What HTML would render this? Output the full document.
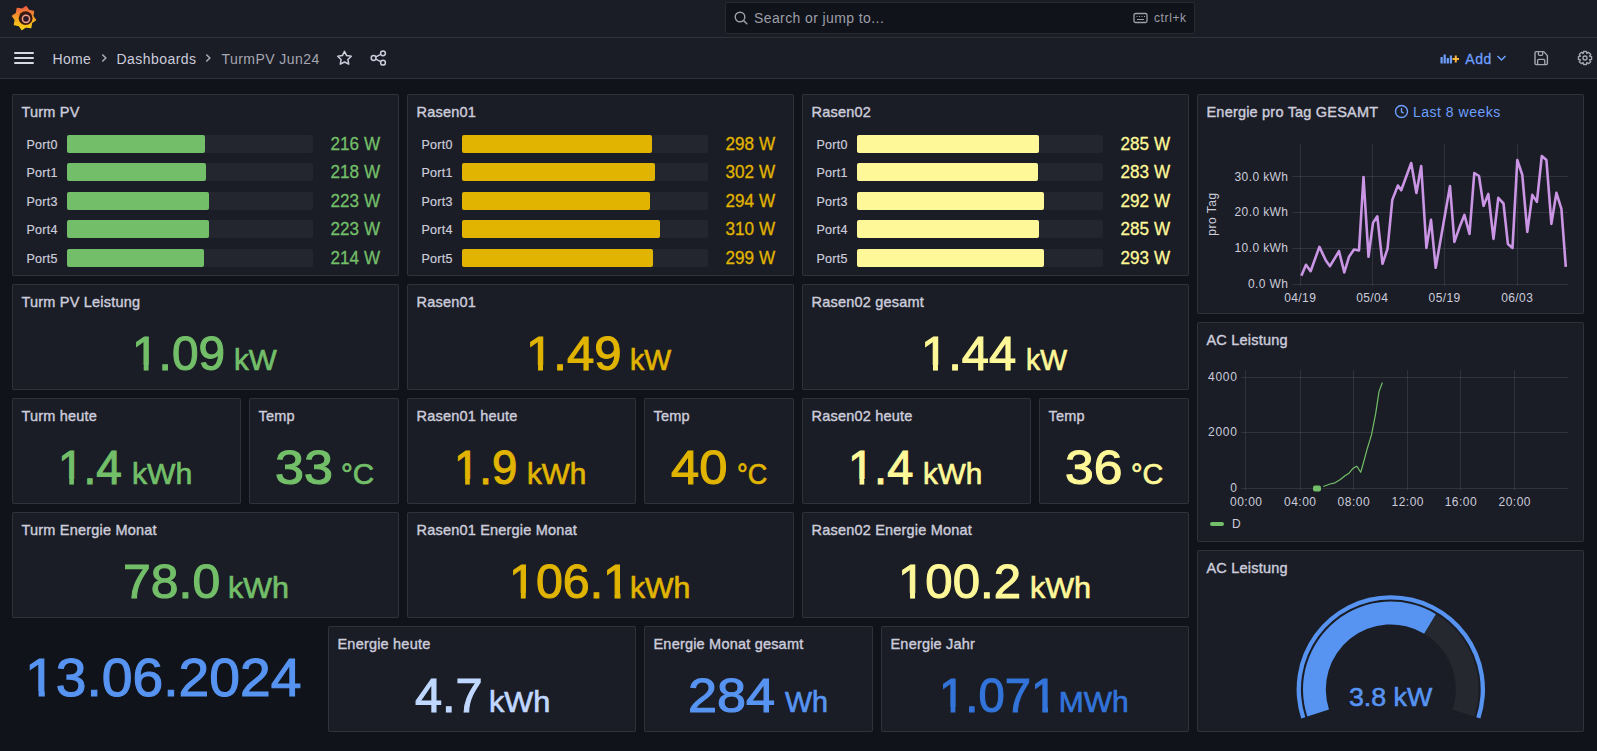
<!DOCTYPE html>
<html><head><meta charset="utf-8">
<style>
*{box-sizing:border-box;margin:0;padding:0}
html,body{width:1597px;height:751px;overflow:hidden;background:#10131a;font-family:"Liberation Sans",sans-serif;color:#ccccdc}
.t{position:absolute;line-height:0;white-space:nowrap}
.topbar{position:absolute;left:0;top:0;width:1597px;height:38px;background:#1a1d25;border-bottom:1px solid rgba(204,204,220,0.12)}
.navbar{position:absolute;left:0;top:38px;width:1597px;height:41px;background:#1a1d25;border-bottom:1px solid rgba(204,204,220,0.12)}
.search{position:absolute;left:725px;top:2px;width:470px;height:32px;background:#10131a;border:1px solid rgba(204,204,220,0.12);border-radius:2px}
.panel{position:absolute;background:#1a1d25;border:1px solid rgba(204,204,220,0.12);border-radius:2px;overflow:hidden}
.pt{-webkit-text-stroke:0.4px #ccccdc;letter-spacing:0.2px}
svg{position:absolute;overflow:visible}
.bar{position:absolute;height:18px;border-radius:2px}
.bg2{background:#23262e}
.one{position:relative}
.one::before,.one::after{content:"";position:absolute;background:var(--bg);bottom:calc(0.212em - 1.8px);height:calc(0.0747em + 2.4px)}
.one::before{left:calc(0.0762em - 2px);width:calc(0.1753em + 1.5px)}
.one::after{left:calc(0.3398em + 0.5px);width:calc(0.1675em + 2px)}
</style></head><body>

<div class="topbar">
<svg style="left:12px;top:6px" width="24" height="24" viewBox="0 0 24 24">
<defs><linearGradient id="lg" x1="0" y1="1" x2="0" y2="0"><stop offset="0" stop-color="#fbd515"/><stop offset="0.45" stop-color="#f5a623"/><stop offset="1" stop-color="#ef5b45"/></linearGradient></defs>
<polygon points="14.05,0.38 16.84,4.41 21.67,5.23 20.79,10.05 23.62,14.05 19.59,16.84 18.77,21.67 13.95,20.79 9.95,23.62 7.16,19.59 2.33,18.77 3.21,13.95 0.38,9.95 4.41,7.16 5.23,2.33 10.05,3.21" fill="url(#lg)" stroke="url(#lg)" stroke-width="1.2" stroke-linejoin="round"/>
<circle cx="13.6" cy="12.2" r="6.9" fill="#3a1a10"/>
<circle cx="14" cy="12.8" r="3.6" fill="none" stroke="#f0a090" stroke-width="1.5"/>
<circle cx="14.2" cy="13" r="1.9" fill="#221838"/>
</svg>
<div class="search"></div>
<svg style="left:734px;top:11px" width="14" height="14" viewBox="0 0 14 14"><circle cx="6" cy="6" r="4.8" fill="none" stroke="#9d9ea8" stroke-width="1.4"/><path d="M9.5 9.5 L12.8 12.8" stroke="#9d9ea8" stroke-width="1.5" stroke-linecap="round"/></svg>
<div class="t " style="left:754px;top:17.65px;font-size:14px;color:#9d9ea8;letter-spacing:0.4px">Search or jump to...</div>
<svg style="left:1133px;top:12px" width="16" height="12" viewBox="0 0 16 12"><rect x="1" y="1.5" width="13" height="9" rx="1.5" fill="none" stroke="#9d9ea8" stroke-width="1.3"/><path d="M3.5 4.5h1M6 4.5h1M8.5 4.5h1M11 4.5h1M4 7.5h7" stroke="#9d9ea8" stroke-width="1.1"/></svg>
<div class="t " style="left:1154px;top:17.84px;font-size:12px;color:#9d9ea8;letter-spacing:0.6px">ctrl+k</div>
</div>
<div class="navbar"></div>
<div style="position:absolute;left:14px;top:52px;width:20px;height:2px;background:#d8d9e3;border-radius:1px"></div>
<div style="position:absolute;left:14px;top:57px;width:20px;height:2px;background:#d8d9e3;border-radius:1px"></div>
<div style="position:absolute;left:14px;top:62px;width:20px;height:2px;background:#d8d9e3;border-radius:1px"></div>
<div class="t " style="left:52.5px;top:59.15px;font-size:14px;color:#ccccdc;letter-spacing:0.3px">Home</div>
<svg style="left:100px;top:53px" width="8" height="10" viewBox="0 0 8 10"><path d="M2.3 1.5 L5.8 5 L2.3 8.5" fill="none" stroke="#a5a6b1" stroke-width="1.6"/></svg>
<div class="t " style="left:116.5px;top:59.15px;font-size:14px;color:#ccccdc;letter-spacing:0.45px">Dashboards</div>
<svg style="left:204px;top:53px" width="8" height="10" viewBox="0 0 8 10"><path d="M2.3 1.5 L5.8 5 L2.3 8.5" fill="none" stroke="#a5a6b1" stroke-width="1.6"/></svg>
<div class="t " style="left:221.5px;top:59.15px;font-size:14px;color:#a5a6b1;letter-spacing:0.45px">TurmPV Jun24</div>
<svg style="left:336px;top:50px" width="17" height="16" viewBox="0 0 17 16"><path d="M8.5 1.3 L10.6 5.6 L15.3 6.2 L11.9 9.5 L12.7 14.2 L8.5 12 L4.3 14.2 L5.1 9.5 L1.7 6.2 L6.4 5.6 Z" fill="none" stroke="#ccccdc" stroke-width="1.5" stroke-linejoin="round"/></svg>
<svg style="left:370px;top:50px" width="17" height="16" viewBox="0 0 17 16"><circle cx="13" cy="3.3" r="2.4" fill="none" stroke="#ccccdc" stroke-width="1.5"/><circle cx="3.6" cy="8" r="2.4" fill="none" stroke="#ccccdc" stroke-width="1.5"/><circle cx="13" cy="12.7" r="2.4" fill="none" stroke="#ccccdc" stroke-width="1.5"/><path d="M5.8 6.9 L10.8 4.4 M5.8 9.1 L10.8 11.6" stroke="#ccccdc" stroke-width="1.5"/></svg>
<svg style="left:1440px;top:53px" width="20" height="11" viewBox="0 0 20 11"><rect x="0.5" y="4" width="2.2" height="6.5" fill="#6e9fff"/><rect x="3.6" y="1.5" width="2.2" height="9" fill="#6e9fff"/><rect x="6.7" y="5" width="2.2" height="5.5" fill="#6e9fff"/><rect x="9.8" y="2.5" width="2.2" height="8" fill="#6e9fff"/><path d="M15.8 2.5 V9.5 M12.5 6 H19" stroke="#f5b73d" stroke-width="2"/></svg>
<div class="t " style="left:1465.3px;top:59.15px;font-size:14px;color:#6e9fff;letter-spacing:0.6px;-webkit-text-stroke:0.3px #6e9fff">Add</div>
<svg style="left:1496px;top:54px" width="11" height="8" viewBox="0 0 11 8"><path d="M1.5 2 L5.5 6 L9.5 2" fill="none" stroke="#6e9fff" stroke-width="1.5"/></svg>
<svg style="left:1533px;top:50px" width="17" height="16" viewBox="0 0 17 16"><path d="M3.3 1.6 H10.8 L14.4 5.6 V13.3 Q14.4 14.6 13.1 14.6 H3.3 Q2 14.6 2 13.3 V2.9 Q2 1.6 3.3 1.6 Z" fill="none" stroke="#a5a6b1" stroke-width="1.4" stroke-linejoin="round"/><path d="M5.4 2 V4.2 Q5.4 5.3 6.5 5.3 H8.6 Q9.7 5.3 9.7 4.2 V2" fill="none" stroke="#a5a6b1" stroke-width="1.3"/><path d="M4.6 14.3 V10.6 Q4.6 9.3 5.9 9.3 H10.5 Q11.8 9.3 11.8 10.6 V14.3" fill="none" stroke="#a5a6b1" stroke-width="1.3"/></svg>
<svg style="left:1577px;top:49.8px" width="16" height="16" viewBox="0 0 16 16"><polygon points="12.57,5.97 14.55,6.61 14.55,9.39 12.57,10.03 12.67,9.79 13.62,11.65 11.65,13.62 9.79,12.67 10.03,12.57 9.39,14.55 6.61,14.55 5.97,12.57 6.21,12.67 4.35,13.62 2.38,11.65 3.33,9.79 3.43,10.03 1.45,9.39 1.45,6.61 3.43,5.97 3.33,6.21 2.38,4.35 4.35,2.38 6.21,3.33 5.97,3.43 6.61,1.45 9.39,1.45 10.03,3.43 9.79,3.33 11.65,2.38 13.62,4.35 12.67,6.21" fill="none" stroke="#a5a6b1" stroke-width="1.4" stroke-linejoin="round"/><circle cx="8" cy="8" r="2.0" fill="none" stroke="#a5a6b1" stroke-width="1.4"/></svg>
<div class="panel" style="left:12px;top:94px;width:387px;height:182px"></div>
<div class="t pt" style="left:21.5px;top:111.98px;font-size:14.5px;color:#ccccdc;">Turm PV</div>
<div class="bar bg2" style="left:67px;top:135px;width:246px"></div>
<div class="bar" style="left:67px;top:135px;width:138px;background:#73bf69"></div>
<div class="t " style="right:1539.2px;top:144.97px;font-size:12.5px;color:#ccccdc;letter-spacing:0.3px;-webkit-text-stroke:0.2px #ccccdc">Port0</div>
<div class="t" style="right:1216.5px;top:143.96px;font-size:18px;color:#73bf69;-webkit-text-stroke:0.3px #73bf69;transform:scaleX(0.95);transform-origin:100% 0">216 W</div>
<div class="bar bg2" style="left:67px;top:163px;width:246px"></div>
<div class="bar" style="left:67px;top:163px;width:139px;background:#73bf69"></div>
<div class="t " style="right:1539.2px;top:172.97px;font-size:12.5px;color:#ccccdc;letter-spacing:0.3px;-webkit-text-stroke:0.2px #ccccdc">Port1</div>
<div class="t" style="right:1216.5px;top:171.96px;font-size:18px;color:#73bf69;-webkit-text-stroke:0.3px #73bf69;transform:scaleX(0.95);transform-origin:100% 0">218 W</div>
<div class="bar bg2" style="left:67px;top:192px;width:246px"></div>
<div class="bar" style="left:67px;top:192px;width:142px;background:#73bf69"></div>
<div class="t " style="right:1539.2px;top:201.97px;font-size:12.5px;color:#ccccdc;letter-spacing:0.3px;-webkit-text-stroke:0.2px #ccccdc">Port3</div>
<div class="t" style="right:1216.5px;top:200.96px;font-size:18px;color:#73bf69;-webkit-text-stroke:0.3px #73bf69;transform:scaleX(0.95);transform-origin:100% 0">223 W</div>
<div class="bar bg2" style="left:67px;top:220px;width:246px"></div>
<div class="bar" style="left:67px;top:220px;width:142px;background:#73bf69"></div>
<div class="t " style="right:1539.2px;top:229.97px;font-size:12.5px;color:#ccccdc;letter-spacing:0.3px;-webkit-text-stroke:0.2px #ccccdc">Port4</div>
<div class="t" style="right:1216.5px;top:228.96px;font-size:18px;color:#73bf69;-webkit-text-stroke:0.3px #73bf69;transform:scaleX(0.95);transform-origin:100% 0">223 W</div>
<div class="bar bg2" style="left:67px;top:249px;width:246px"></div>
<div class="bar" style="left:67px;top:249px;width:137px;background:#73bf69"></div>
<div class="t " style="right:1539.2px;top:258.97px;font-size:12.5px;color:#ccccdc;letter-spacing:0.3px;-webkit-text-stroke:0.2px #ccccdc">Port5</div>
<div class="t" style="right:1216.5px;top:257.96px;font-size:18px;color:#73bf69;-webkit-text-stroke:0.3px #73bf69;transform:scaleX(0.95);transform-origin:100% 0">214 W</div>
<div class="panel" style="left:407px;top:94px;width:387px;height:182px"></div>
<div class="t pt" style="left:416.5px;top:111.98px;font-size:14.5px;color:#ccccdc;">Rasen01</div>
<div class="bar bg2" style="left:462px;top:135px;width:246px"></div>
<div class="bar" style="left:462px;top:135px;width:190px;background:#e0b400"></div>
<div class="t " style="right:1144.2px;top:144.97px;font-size:12.5px;color:#ccccdc;letter-spacing:0.3px;-webkit-text-stroke:0.2px #ccccdc">Port0</div>
<div class="t" style="right:821.5px;top:143.96px;font-size:18px;color:#e0b400;-webkit-text-stroke:0.3px #e0b400;transform:scaleX(0.95);transform-origin:100% 0">298 W</div>
<div class="bar bg2" style="left:462px;top:163px;width:246px"></div>
<div class="bar" style="left:462px;top:163px;width:193px;background:#e0b400"></div>
<div class="t " style="right:1144.2px;top:172.97px;font-size:12.5px;color:#ccccdc;letter-spacing:0.3px;-webkit-text-stroke:0.2px #ccccdc">Port1</div>
<div class="t" style="right:821.5px;top:171.96px;font-size:18px;color:#e0b400;-webkit-text-stroke:0.3px #e0b400;transform:scaleX(0.95);transform-origin:100% 0">302 W</div>
<div class="bar bg2" style="left:462px;top:192px;width:246px"></div>
<div class="bar" style="left:462px;top:192px;width:188px;background:#e0b400"></div>
<div class="t " style="right:1144.2px;top:201.97px;font-size:12.5px;color:#ccccdc;letter-spacing:0.3px;-webkit-text-stroke:0.2px #ccccdc">Port3</div>
<div class="t" style="right:821.5px;top:200.96px;font-size:18px;color:#e0b400;-webkit-text-stroke:0.3px #e0b400;transform:scaleX(0.95);transform-origin:100% 0">294 W</div>
<div class="bar bg2" style="left:462px;top:220px;width:246px"></div>
<div class="bar" style="left:462px;top:220px;width:198px;background:#e0b400"></div>
<div class="t " style="right:1144.2px;top:229.97px;font-size:12.5px;color:#ccccdc;letter-spacing:0.3px;-webkit-text-stroke:0.2px #ccccdc">Port4</div>
<div class="t" style="right:821.5px;top:228.96px;font-size:18px;color:#e0b400;-webkit-text-stroke:0.3px #e0b400;transform:scaleX(0.95);transform-origin:100% 0">310 W</div>
<div class="bar bg2" style="left:462px;top:249px;width:246px"></div>
<div class="bar" style="left:462px;top:249px;width:191px;background:#e0b400"></div>
<div class="t " style="right:1144.2px;top:258.97px;font-size:12.5px;color:#ccccdc;letter-spacing:0.3px;-webkit-text-stroke:0.2px #ccccdc">Port5</div>
<div class="t" style="right:821.5px;top:257.96px;font-size:18px;color:#e0b400;-webkit-text-stroke:0.3px #e0b400;transform:scaleX(0.95);transform-origin:100% 0">299 W</div>
<div class="panel" style="left:802px;top:94px;width:387px;height:182px"></div>
<div class="t pt" style="left:811.5px;top:111.98px;font-size:14.5px;color:#ccccdc;">Rasen02</div>
<div class="bar bg2" style="left:857px;top:135px;width:246px"></div>
<div class="bar" style="left:857px;top:135px;width:182px;background:#fff899"></div>
<div class="t " style="right:749.2px;top:144.97px;font-size:12.5px;color:#ccccdc;letter-spacing:0.3px;-webkit-text-stroke:0.2px #ccccdc">Port0</div>
<div class="t" style="right:426.5px;top:143.96px;font-size:18px;color:#fff899;-webkit-text-stroke:0.3px #fff899;transform:scaleX(0.95);transform-origin:100% 0">285 W</div>
<div class="bar bg2" style="left:857px;top:163px;width:246px"></div>
<div class="bar" style="left:857px;top:163px;width:181px;background:#fff899"></div>
<div class="t " style="right:749.2px;top:172.97px;font-size:12.5px;color:#ccccdc;letter-spacing:0.3px;-webkit-text-stroke:0.2px #ccccdc">Port1</div>
<div class="t" style="right:426.5px;top:171.96px;font-size:18px;color:#fff899;-webkit-text-stroke:0.3px #fff899;transform:scaleX(0.95);transform-origin:100% 0">283 W</div>
<div class="bar bg2" style="left:857px;top:192px;width:246px"></div>
<div class="bar" style="left:857px;top:192px;width:187px;background:#fff899"></div>
<div class="t " style="right:749.2px;top:201.97px;font-size:12.5px;color:#ccccdc;letter-spacing:0.3px;-webkit-text-stroke:0.2px #ccccdc">Port3</div>
<div class="t" style="right:426.5px;top:200.96px;font-size:18px;color:#fff899;-webkit-text-stroke:0.3px #fff899;transform:scaleX(0.95);transform-origin:100% 0">292 W</div>
<div class="bar bg2" style="left:857px;top:220px;width:246px"></div>
<div class="bar" style="left:857px;top:220px;width:182px;background:#fff899"></div>
<div class="t " style="right:749.2px;top:229.97px;font-size:12.5px;color:#ccccdc;letter-spacing:0.3px;-webkit-text-stroke:0.2px #ccccdc">Port4</div>
<div class="t" style="right:426.5px;top:228.96px;font-size:18px;color:#fff899;-webkit-text-stroke:0.3px #fff899;transform:scaleX(0.95);transform-origin:100% 0">285 W</div>
<div class="bar bg2" style="left:857px;top:249px;width:246px"></div>
<div class="bar" style="left:857px;top:249px;width:187px;background:#fff899"></div>
<div class="t " style="right:749.2px;top:258.97px;font-size:12.5px;color:#ccccdc;letter-spacing:0.3px;-webkit-text-stroke:0.2px #ccccdc">Port5</div>
<div class="t" style="right:426.5px;top:257.96px;font-size:18px;color:#fff899;-webkit-text-stroke:0.3px #fff899;transform:scaleX(0.95);transform-origin:100% 0">293 W</div>
<div class="panel" style="left:12px;top:284px;width:387px;height:106px"></div>
<div class="t pt" style="left:21.5px;top:301.98px;font-size:14.5px;color:#ccccdc;">Turm PV Leistung</div>
<div class="panel" style="left:407px;top:284px;width:387px;height:106px"></div>
<div class="t pt" style="left:416.5px;top:301.98px;font-size:14.5px;color:#ccccdc;">Rasen01</div>
<div class="panel" style="left:802px;top:284px;width:387px;height:106px"></div>
<div class="t pt" style="left:811.5px;top:301.98px;font-size:14.5px;color:#ccccdc;">Rasen02 gesamt</div>
<div class="panel" style="left:12px;top:398px;width:229px;height:106px"></div>
<div class="t pt" style="left:21.5px;top:415.98px;font-size:14.5px;color:#ccccdc;">Turm heute</div>
<div class="panel" style="left:249px;top:398px;width:150px;height:106px"></div>
<div class="t pt" style="left:258.5px;top:415.98px;font-size:14.5px;color:#ccccdc;">Temp</div>
<div class="panel" style="left:407px;top:398px;width:229px;height:106px"></div>
<div class="t pt" style="left:416.5px;top:415.98px;font-size:14.5px;color:#ccccdc;">Rasen01 heute</div>
<div class="panel" style="left:644px;top:398px;width:150px;height:106px"></div>
<div class="t pt" style="left:653.5px;top:415.98px;font-size:14.5px;color:#ccccdc;">Temp</div>
<div class="panel" style="left:802px;top:398px;width:229px;height:106px"></div>
<div class="t pt" style="left:811.5px;top:415.98px;font-size:14.5px;color:#ccccdc;">Rasen02 heute</div>
<div class="panel" style="left:1039px;top:398px;width:150px;height:106px"></div>
<div class="t pt" style="left:1048.5px;top:415.98px;font-size:14.5px;color:#ccccdc;">Temp</div>
<div class="panel" style="left:12px;top:512px;width:387px;height:106px"></div>
<div class="t pt" style="left:21.5px;top:529.98px;font-size:14.5px;color:#ccccdc;">Turm Energie Monat</div>
<div class="panel" style="left:407px;top:512px;width:387px;height:106px"></div>
<div class="t pt" style="left:416.5px;top:529.98px;font-size:14.5px;color:#ccccdc;">Rasen01 Energie Monat</div>
<div class="panel" style="left:802px;top:512px;width:387px;height:106px"></div>
<div class="t pt" style="left:811.5px;top:529.98px;font-size:14.5px;color:#ccccdc;">Rasen02 Energie Monat</div>
<div class="panel" style="left:328px;top:626px;width:308px;height:106px"></div>
<div class="t pt" style="left:337.5px;top:643.98px;font-size:14.5px;color:#ccccdc;">Energie heute</div>
<div class="panel" style="left:644px;top:626px;width:229px;height:106px"></div>
<div class="t pt" style="left:653.5px;top:643.98px;font-size:14.5px;color:#ccccdc;">Energie Monat gesamt</div>
<div class="panel" style="left:881px;top:626px;width:308px;height:106px"></div>
<div class="t pt" style="left:890.5px;top:643.98px;font-size:14.5px;color:#ccccdc;">Energie Jahr</div>
<div class="panel" style="left:1197px;top:94px;width:387px;height:220px"></div>
<div class="t pt" style="left:1206.5px;top:111.98px;font-size:14.5px;color:#ccccdc;">Energie pro Tag GESAMT</div>
<div class="panel" style="left:1197px;top:322px;width:387px;height:220px"></div>
<div class="t pt" style="left:1206.5px;top:339.98px;font-size:14.5px;color:#ccccdc;">AC Leistung</div>
<svg style="left:1394px;top:104px" width="15" height="15" viewBox="0 0 15 15"><circle cx="7.5" cy="7.5" r="6" fill="none" stroke="#6e9fff" stroke-width="1.4"/><path d="M7.5 4 V7.8 L9.6 9.2" fill="none" stroke="#6e9fff" stroke-width="1.4"/></svg>
<div class="t " style="left:1413px;top:112.15px;font-size:14px;color:#6e9fff;letter-spacing:0.5px">Last 8 weeks</div>
<svg style="left:0;top:0" width="1597" height="751">
<line x1="1292" y1="176.5" x2="1568" y2="176.5" stroke="rgba(204,204,220,0.12)" stroke-width="1"/>
<line x1="1292" y1="212.5" x2="1568" y2="212.5" stroke="rgba(204,204,220,0.12)" stroke-width="1"/>
<line x1="1292" y1="248.5" x2="1568" y2="248.5" stroke="rgba(204,204,220,0.12)" stroke-width="1"/>
<line x1="1292" y1="284.5" x2="1568" y2="284.5" stroke="rgba(204,204,220,0.12)" stroke-width="1"/>
<line x1="1300.5" y1="144" x2="1300.5" y2="286" stroke="rgba(204,204,220,0.12)" stroke-width="1"/>
<line x1="1372.5" y1="144" x2="1372.5" y2="286" stroke="rgba(204,204,220,0.12)" stroke-width="1"/>
<line x1="1444.5" y1="144" x2="1444.5" y2="286" stroke="rgba(204,204,220,0.12)" stroke-width="1"/>
<line x1="1517.5" y1="144" x2="1517.5" y2="286" stroke="rgba(204,204,220,0.12)" stroke-width="1"/>
<polyline points="1301.4,275.8 1306,264.8 1310.6,271.2 1319.4,246.9 1326,260.8 1330,266.2 1339,251.2 1344.3,272.4 1349,256.8 1354,249.5 1359,250.5 1363.5,177 1368.5,256.8 1373,222.9 1377.3,216.3 1382.5,263.8 1387.5,248.8 1392.3,199.9 1397.9,185.5 1401.2,190.3 1411.2,163 1416.4,193 1421.2,166 1426.4,247.9 1431,219.9 1435.7,267.8 1450,186 1454.4,241.9 1460,225.9 1464.4,214.9 1469.5,233.9 1474.3,173 1479,176 1483.5,205.9 1488.3,193.9 1493.5,238.9 1498.3,197.9 1503.5,203.5 1507.9,243.9 1512.5,247.9 1517.3,160 1522.3,175 1527.3,231.9 1532.3,194.9 1536.9,201.9 1541.8,156 1546.4,160 1551.4,223.9 1556.4,192.9 1561.4,208.9 1565.8,266.8" fill="none" stroke="#ca95e5" stroke-width="2.6" stroke-linejoin="round"/>
<line x1="1241" y1="377.5" x2="1568" y2="377.5" stroke="rgba(204,204,220,0.12)" stroke-width="1"/>
<line x1="1241" y1="432.5" x2="1568" y2="432.5" stroke="rgba(204,204,220,0.12)" stroke-width="1"/>
<line x1="1241" y1="488.5" x2="1568" y2="488.5" stroke="rgba(204,204,220,0.12)" stroke-width="1"/>
<line x1="1245.5" y1="370" x2="1245.5" y2="490" stroke="rgba(204,204,220,0.12)" stroke-width="1"/>
<line x1="1300.5" y1="370" x2="1300.5" y2="490" stroke="rgba(204,204,220,0.12)" stroke-width="1"/>
<line x1="1353.5" y1="370" x2="1353.5" y2="490" stroke="rgba(204,204,220,0.12)" stroke-width="1"/>
<line x1="1407.5" y1="370" x2="1407.5" y2="490" stroke="rgba(204,204,220,0.12)" stroke-width="1"/>
<line x1="1460.5" y1="370" x2="1460.5" y2="490" stroke="rgba(204,204,220,0.12)" stroke-width="1"/>
<line x1="1514.5" y1="370" x2="1514.5" y2="490" stroke="rgba(204,204,220,0.12)" stroke-width="1"/>
<polyline points="1323.3,486.5 1330,484 1335,482.8 1340,479.8 1345,475.7 1349,473.2 1353.2,468.2 1356.6,466.2 1358.2,468.2 1360.7,472.3 1362.4,466.5 1367.4,448.2 1371.5,434.9 1375.7,413.3 1379,391.6 1382.4,382.5" fill="none" stroke="#73bf69" stroke-width="1.2" stroke-linejoin="round"/>
<rect x="1313" y="485.5" width="8" height="6" rx="2" fill="#73bf69"/>
<rect x="1210" y="522" width="14" height="4" rx="2" fill="#73bf69"/>
</svg>
<div class="t " style="right:308.5999999999999px;top:176.54px;font-size:12px;color:#ccccdc;letter-spacing:0.4px">30.0 kWh</div>
<div class="t " style="right:308.5999999999999px;top:212.44px;font-size:12px;color:#ccccdc;letter-spacing:0.4px">20.0 kWh</div>
<div class="t " style="right:308.5999999999999px;top:248.14px;font-size:12px;color:#ccccdc;letter-spacing:0.4px">10.0 kWh</div>
<div class="t " style="right:308.5999999999999px;top:284.14px;font-size:12px;color:#ccccdc;letter-spacing:0.4px">0.0 Wh</div>
<div class="t " style="left:800.2px;width:1000px;text-align:center;top:298.34px;font-size:12px;color:#ccccdc;letter-spacing:0.4px">04/19</div>
<div class="t " style="left:872.2px;width:1000px;text-align:center;top:298.34px;font-size:12px;color:#ccccdc;letter-spacing:0.4px">05/04</div>
<div class="t " style="left:944.6000000000001px;width:1000px;text-align:center;top:298.34px;font-size:12px;color:#ccccdc;letter-spacing:0.4px">05/19</div>
<div class="t " style="left:1017.2px;width:1000px;text-align:center;top:298.34px;font-size:12px;color:#ccccdc;letter-spacing:0.4px">06/03</div>
<div class="t" style="left:1111.5px;width:200px;text-align:center;top:213.84px;font-size:12px;color:#ccccdc;letter-spacing:0.55px;transform:rotate(-90deg);transform-origin:100px 0px">pro Tag</div>
<div class="t " style="right:359.20000000000005px;top:376.64px;font-size:12px;color:#ccccdc;letter-spacing:0.8px">4000</div>
<div class="t " style="right:359.20000000000005px;top:432.14px;font-size:12px;color:#ccccdc;letter-spacing:0.8px">2000</div>
<div class="t " style="right:359.20000000000005px;top:487.64px;font-size:12px;color:#ccccdc;letter-spacing:0.8px">0</div>
<div class="t " style="left:746.25px;width:1000px;text-align:center;top:502.14px;font-size:12px;color:#ccccdc;letter-spacing:0.5px">00:00</div>
<div class="t " style="left:800.25px;width:1000px;text-align:center;top:502.14px;font-size:12px;color:#ccccdc;letter-spacing:0.5px">04:00</div>
<div class="t " style="left:853.8499999999999px;width:1000px;text-align:center;top:502.14px;font-size:12px;color:#ccccdc;letter-spacing:0.5px">08:00</div>
<div class="t " style="left:907.75px;width:1000px;text-align:center;top:502.14px;font-size:12px;color:#ccccdc;letter-spacing:0.5px">12:00</div>
<div class="t " style="left:960.95px;width:1000px;text-align:center;top:502.14px;font-size:12px;color:#ccccdc;letter-spacing:0.5px">16:00</div>
<div class="t " style="left:1014.75px;width:1000px;text-align:center;top:502.14px;font-size:12px;color:#ccccdc;letter-spacing:0.5px">20:00</div>
<div class="t " style="left:1232px;top:523.54px;font-size:12px;color:#ccccdc;">D</div>
<div class="panel" style="left:1197px;top:550px;width:387px;height:182px"></div>
<div class="t pt" style="left:1206.5px;top:567.98px;font-size:14.5px;color:#ccccdc;">AC Leistung</div>
<svg style="left:1197px;top:550px" width="387" height="182">
<path d="M104.21 168.51 A94.20 94.20 0 1 1 283.39 168.51 L279.30 167.18 A89.90 89.90 0 1 0 108.30 167.18 Z" fill="#5794f2"/>
<path d="M110.30 166.53 A87.80 87.80 0 0 1 239.02 64.14 L227.28 83.68 A65.00 65.00 0 0 0 131.98 159.49 Z" fill="#5794f2"/>
<path d="M239.02 64.14 A87.80 87.80 0 0 1 277.30 166.53 L255.62 159.49 A65.00 65.00 0 0 0 227.28 83.68 Z" fill="#25282f"/>
</svg>
<div class="t" style="left:132.10px;top:353.02px;font-size:49px;color:#73bf69;-webkit-text-stroke:1.1px #73bf69;transform:scaleX(0.9756);transform-origin:0 0;--bg:#1a1d25"><span class="one">1</span>.09</div>
<div class="t" style="left:234.02px;top:359.61px;font-size:30px;color:#73bf69;-webkit-text-stroke:0.7px #73bf69;transform:scaleX(0.9881);transform-origin:0 0;--bg:#1a1d25">kW</div>
<div class="t" style="left:526.39px;top:353.02px;font-size:49px;color:#e0b400;-webkit-text-stroke:1.1px #e0b400;transform:scaleX(1.0022);transform-origin:0 0;--bg:#1a1d25"><span class="one">1</span>.49</div>
<div class="t" style="left:630.05px;top:359.61px;font-size:30px;color:#e0b400;-webkit-text-stroke:0.7px #e0b400;transform:scaleX(0.9488);transform-origin:0 0;--bg:#1a1d25">kW</div>
<div class="t" style="left:920.81px;top:353.02px;font-size:49px;color:#fff899;-webkit-text-stroke:1.1px #fff899;transform:scaleX(0.9978);transform-origin:0 0;--bg:#1a1d25"><span class="one">1</span>.44</div>
<div class="t" style="left:1026.25px;top:359.61px;font-size:30px;color:#fff899;-webkit-text-stroke:0.7px #fff899;transform:scaleX(0.9465);transform-origin:0 0;--bg:#1a1d25">kW</div>
<div class="t" style="left:58.28px;top:467.02px;font-size:49px;color:#73bf69;-webkit-text-stroke:1.1px #73bf69;transform:scaleX(0.9381);transform-origin:0 0;--bg:#1a1d25"><span class="one">1</span>.4</div>
<div class="t" style="left:132.19px;top:473.61px;font-size:30px;color:#73bf69;-webkit-text-stroke:0.7px #73bf69;transform:scaleX(1.0070);transform-origin:0 0;--bg:#1a1d25">kWh</div>
<div class="t" style="left:275.32px;top:467.02px;font-size:49px;color:#73bf69;-webkit-text-stroke:1.1px #73bf69;transform:scaleX(1.0635);transform-origin:0 0;--bg:#1a1d25">33</div>
<div class="t" style="left:341.01px;top:473.61px;font-size:30px;color:#73bf69;-webkit-text-stroke:0.7px #73bf69;transform:scaleX(0.9875);transform-origin:0 0;--bg:#1a1d25">°C</div>
<div class="t" style="left:454.48px;top:467.02px;font-size:49px;color:#e0b400;-webkit-text-stroke:1.1px #e0b400;transform:scaleX(0.9286);transform-origin:0 0;--bg:#1a1d25"><span class="one">1</span>.9</div>
<div class="t" style="left:526.82px;top:473.61px;font-size:30px;color:#e0b400;-webkit-text-stroke:0.7px #e0b400;transform:scaleX(0.9897);transform-origin:0 0;--bg:#1a1d25">kWh</div>
<div class="t" style="left:671.19px;top:467.02px;font-size:49px;color:#e0b400;-webkit-text-stroke:1.1px #e0b400;transform:scaleX(1.0340);transform-origin:0 0;--bg:#1a1d25">40</div>
<div class="t" style="left:737.10px;top:473.61px;font-size:30px;color:#e0b400;-webkit-text-stroke:0.7px #e0b400;transform:scaleX(0.9000);transform-origin:0 0;--bg:#1a1d25">°C</div>
<div class="t" style="left:847.98px;top:467.02px;font-size:49px;color:#fff899;-webkit-text-stroke:1.1px #fff899;transform:scaleX(0.9571);transform-origin:0 0;--bg:#1a1d25"><span class="one">1</span>.4</div>
<div class="t" style="left:922.61px;top:473.61px;font-size:30px;color:#fff899;-webkit-text-stroke:0.7px #fff899;transform:scaleX(0.9897);transform-origin:0 0;--bg:#1a1d25">kWh</div>
<div class="t" style="left:1065.33px;top:467.02px;font-size:49px;color:#fff899;-webkit-text-stroke:1.1px #fff899;transform:scaleX(1.0538);transform-origin:0 0;--bg:#1a1d25">36</div>
<div class="t" style="left:1130.87px;top:473.61px;font-size:30px;color:#fff899;-webkit-text-stroke:0.7px #fff899;transform:scaleX(0.9594);transform-origin:0 0;--bg:#1a1d25">°C</div>
<div class="t" style="left:122.56px;top:581.02px;font-size:49px;color:#73bf69;-webkit-text-stroke:1.1px #73bf69;transform:scaleX(1.0185);transform-origin:0 0;--bg:#1a1d25">78.0</div>
<div class="t" style="left:227.98px;top:587.61px;font-size:30px;color:#73bf69;-webkit-text-stroke:0.7px #73bf69;transform:scaleX(1.0158);transform-origin:0 0;--bg:#1a1d25">kWh</div>
<div class="t" style="left:509.05px;top:581.02px;font-size:49px;color:#e0b400;-webkit-text-stroke:1.1px #e0b400;transform:scaleX(0.9862);transform-origin:0 0;--bg:#1a1d25"><span class="one">1</span>06.<span class="one">1</span></div>
<div class="t" style="left:630.39px;top:587.61px;font-size:30px;color:#e0b400;-webkit-text-stroke:0.7px #e0b400;transform:scaleX(1.0052);transform-origin:0 0;--bg:#1a1d25">kWh</div>
<div class="t" style="left:897.99px;top:581.02px;font-size:49px;color:#fff899;-webkit-text-stroke:1.1px #fff899;transform:scaleX(1.0034);transform-origin:0 0;--bg:#1a1d25"><span class="one">1</span>00.2</div>
<div class="t" style="left:1029.97px;top:587.61px;font-size:30px;color:#fff899;-webkit-text-stroke:0.7px #fff899;transform:scaleX(1.0172);transform-origin:0 0;--bg:#1a1d25">kWh</div>
<div class="t" style="left:415.20px;top:695.02px;font-size:49px;color:#c0d8ff;-webkit-text-stroke:1.1px #c0d8ff;transform:scaleX(0.9939);transform-origin:0 0;--bg:#1a1d25">4.7</div>
<div class="t" style="left:489.38px;top:701.61px;font-size:30px;color:#c0d8ff;-webkit-text-stroke:0.7px #c0d8ff;transform:scaleX(1.0207);transform-origin:0 0;--bg:#1a1d25">kWh</div>
<div class="t" style="left:687.87px;top:695.02px;font-size:49px;color:#5794f2;-webkit-text-stroke:1.1px #5794f2;transform:scaleX(1.0658);transform-origin:0 0;--bg:#1a1d25">284</div>
<div class="t" style="left:785.37px;top:701.61px;font-size:30px;color:#5794f2;-webkit-text-stroke:0.7px #5794f2;transform:scaleX(0.9568);transform-origin:0 0;--bg:#1a1d25">Wh</div>
<div class="t" style="left:938.73px;top:695.02px;font-size:49px;color:#3274d9;-webkit-text-stroke:1.1px #3274d9;transform:scaleX(0.9651);transform-origin:0 0;--bg:#1a1d25"><span class="one">1</span>.07<span class="one">1</span></div>
<div class="t" style="left:1058.80px;top:701.61px;font-size:30px;color:#3274d9;-webkit-text-stroke:0.7px #3274d9;transform:scaleX(1.0000);transform-origin:0 0;--bg:#1a1d25">MWh</div>
<div class="t" style="left:25.22px;top:677.64px;font-size:53px;color:#5794f2;-webkit-text-stroke:1.1px #5794f2;transform:scaleX(1.0419);transform-origin:0 0;--bg:#10131a"><span class="one">1</span>3.06.2024</div>
<div class="t" style="left:1349.00px;top:697.29px;font-size:26px;color:#5794f2;-webkit-text-stroke:0.6px #5794f2;transform:scaleX(1.0284);transform-origin:0 0;--bg:#1a1d25">3.8 kW</div>
</body></html>
